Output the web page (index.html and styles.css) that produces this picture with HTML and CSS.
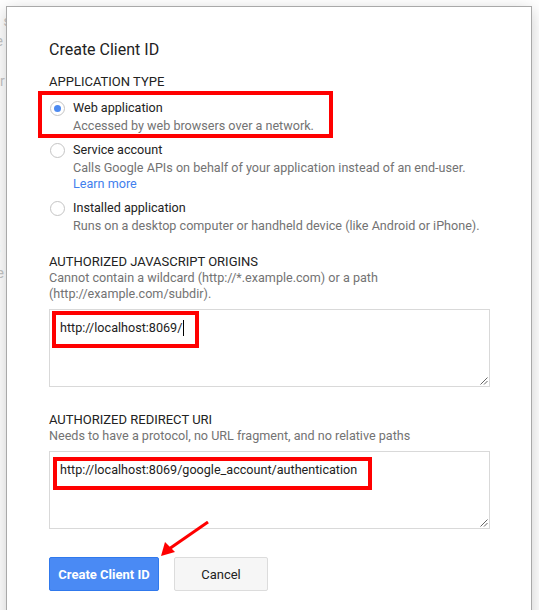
FILE: index.html
```html
<!DOCTYPE html>
<html>
<head>
<meta charset="utf-8">
<link rel="stylesheet" href="styles.css">
</head>
<body>
<div class="backdrop">
  <div class="bd-line bd1">o s</div>
  <div class="bd-line bd2">le</div>
  <div class="bd-line bd3">a</div>
  <div class="bd-line bd4">or</div>
  <div class="bd-line bd5">S</div>
  <div class="bd-line bd6">re</div>
  <div class="bd-line bd7">o</div>
</div>
<div class="dialog">
  <h1 class="title">Create Client ID</h1>
  <div class="section-label first">APPLICATION TYPE</div>
  <div class="options">
    <div class="option">
      <span class="radio checked"></span>
      <div class="opt-text">
        <div class="opt-label">Web application</div>
        <div class="opt-desc">Accessed by web browsers over a network.</div>
      </div>
    </div>
    <div class="option">
      <span class="radio"></span>
      <div class="opt-text">
        <div class="opt-label">Service account</div>
        <div class="opt-desc">Calls Google APIs on behalf of your application instead of an end-user.</div>
        <div class="opt-desc"><a class="link">Learn more</a></div>
      </div>
    </div>
    <div class="option">
      <span class="radio"></span>
      <div class="opt-text">
        <div class="opt-label">Installed application</div>
        <div class="opt-desc">Runs on a desktop computer or handheld device (like Android or iPhone).</div>
      </div>
    </div>
  </div>

  <div class="section-label">AUTHORIZED JAVASCRIPT ORIGINS</div>
  <div class="help">Cannot contain a wildcard (http://*.example.com) or a path<br>(http://example.com/subdir).</div>
  <div class="field">
    <div class="field-text">http://localhost:8069/<span class="caret"></span></div>
    <svg class="grip" width="9" height="9" viewBox="0 0 9 9"><path d="M8.5 1.5L1.5 8.5M8.5 5L5 8.5" stroke="#555" stroke-width="0.9" fill="none"/></svg>
  </div>

  <div class="section-label second">AUTHORIZED REDIRECT URI</div>
  <div class="help">Needs to have a protocol, no URL fragment, and no relative paths</div>
  <div class="field">
    <div class="field-text">http://localhost:8069/google_account/authentication</div>
    <svg class="grip" width="9" height="9" viewBox="0 0 9 9"><path d="M8.5 1.5L1.5 8.5M8.5 5L5 8.5" stroke="#555" stroke-width="0.9" fill="none"/></svg>
  </div>

  <div class="actions">
    <button class="btn btn-primary">Create Client ID</button>
    <button class="btn btn-default">Cancel</button>
  </div>
</div>

<div class="mark mark1"></div>
<div class="mark mark2"></div>
<div class="mark mark3"></div>
<svg class="arrow" width="60" height="40" viewBox="0 0 60 40">
  <path d="M53 1 L14 28" stroke="#f00" stroke-width="3" fill="none"/>
  <path d="M6 35 L10 21 L20 31 Z" fill="#f00"/>
</svg>
</body>
</html>
```

FILE: styles.css
```css
html, body {
  margin: 0;
  padding: 0;
  background: #fff;
  overflow: hidden;
  height: 610px;
}
body {
  position: relative;
  font-family: Roboto, "Liberation Sans", Arial, sans-serif;
  font-size: 12.6px;
  color: #222;
}
.backdrop {
  position: absolute;
  left: -8px;
  top: 0;
  color: #c4c4c4;
  font-size: 14px;
}
.bd-line { position: absolute; left: 0; white-space: nowrap; }
.bd1 { top: 13px; }
.bd2 { top: 33px; }
.bd3 { top: 53px; }
.bd4 { top: 73px; }
.bd5 { top: 241px; }
.bd6 { top: 265px; }
.bd7 { top: 289px; }

.dialog {
  position: relative;
  margin: 6px 0 0 6px;
  width: 482px;
  min-height: 700px;
  padding: 33px 0 0 42px;
  background: #fff;
  border: 1px solid #a9a9a9;
  box-shadow: 0 4px 16px rgba(0,0,0,0.2);
}
.title {
  margin: 0;
  font-size: 16px;
  font-weight: 400;
  line-height: 20px;
  color: #222;
}
.section-label {
  font-size: 13px;
  line-height: 16px;
  color: #222;
  margin-top: 20px;
}
.section-label.first { margin-top: 14px; }
.section-label.second { margin-top: 25px; }
.options {
  display: flex;
  flex-direction: column;
  gap: 7px;
  margin-top: 9px;
}
.option {
  display: flex;
  align-items: flex-start;
}
.radio {
  box-sizing: border-box;
  width: 15px;
  height: 15px;
  margin: 2px 8px 0 1px;
  border: 1px solid #c4c4c4;
  border-radius: 50%;
  background: #fff;
  display: flex;
  align-items: center;
  justify-content: center;
  flex: none;
}
.radio.checked::after {
  content: "";
  width: 7px;
  height: 7px;
  border-radius: 50%;
  background: #4d8af0;
}
.opt-label { line-height: 18px; color: #222; }
.opt-desc { line-height: 16px; color: #737373; margin-top: 1px; }
.opt-desc + .opt-desc { margin-top: 0; }
.link { color: #427fed; text-decoration: none; }
.help {
  line-height: 16px;
  color: #737373;
}
.field {
  position: relative;
  box-sizing: border-box;
  width: 441px;
  height: 78px;
  margin-top: 7px;
  border: 1px solid #d9d9d9;
  padding: 10px 10px;
}
.field-text {
  line-height: 16px;
  color: #222;
  display: flex;
  align-items: center;
}
.caret {
  display: inline-block;
  width: 1px;
  height: 16px;
  background: #000;
  margin-left: 1px;
}
.grip {
  position: absolute;
  right: 1px;
  bottom: 1px;
}
.actions {
  display: flex;
  gap: 15px;
  margin-top: 28px;
}
.btn {
  box-sizing: border-box;
  height: 34px;
  font-family: Roboto, "Liberation Sans", Arial, sans-serif;
  font-size: 13px;
  border-radius: 2px;
  padding: 0;
}
.btn-primary {
  width: 110px;
  background: #4a8af4;
  border: 1px solid #3079ed;
  color: #fff;
  font-weight: 700;
}
.btn-default {
  width: 94px;
  background: #f6f6f6;
  border: 1px solid #dcdcdc;
  color: #222;
}

.mark {
  position: absolute;
  box-sizing: border-box;
  border: 4px solid #f00;
}
.mark1 { left: 38px; top: 91px; width: 295px; height: 47px; }
.mark2 { left: 52px; top: 311px; width: 147px; height: 37px; }
.mark3 { left: 53px; top: 457px; width: 319px; height: 33px; }
.arrow {
  position: absolute;
  left: 155px;
  top: 521px;
}
```
